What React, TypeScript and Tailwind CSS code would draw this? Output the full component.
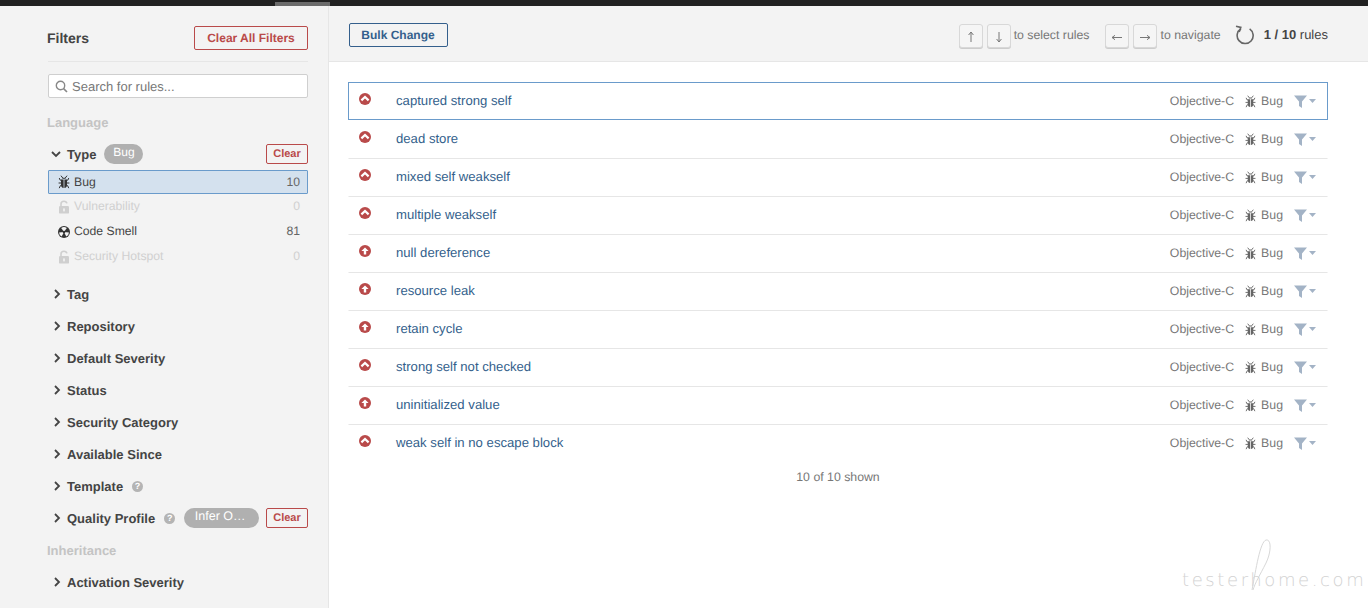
import React from "react";

const font = { fontFamily: '"Liberation Sans", Arial, sans-serif' };

function BugIcon({ className = "", color = "#333" }: { className?: string; color?: string }) {
  return (
    <svg viewBox="0 0 12 14" className={className} aria-hidden="true">
      <g stroke={color} strokeWidth="1" fill="none" strokeLinecap="round">
        <path d="M3.2 1 L4.6 2.8" />
        <path d="M8.8 1 L7.4 2.8" />
        <path d="M1.4 3.4 L2.2 5.2 L3 5.2" />
        <path d="M10.6 3.4 L9.8 5.2 L9 5.2" />
        <path d="M1 8 L3 8" />
        <path d="M11 8 L9 8" />
        <path d="M1.4 12.8 L2.4 10.6 L3 10.6" />
        <path d="M10.6 12.8 L9.6 10.6 L9 10.6" />
      </g>
      <path d="M4.2 3.8 C4.4 2.4 7.6 2.4 7.8 3.8 Z" fill={color} />
      <path d="M3 4.6 H5.6 V13 C4 12.9 3 11.6 3 10 Z" fill={color} />
      <path d="M9 4.6 H6.4 V13 C8 12.9 9 11.6 9 10 Z" fill={color} />
    </svg>
  );
}

function LockIcon({ color = "#cfcfcf" }: { color?: string }) {
  return (
    <svg viewBox="0 0 12 14" className="w-[12px] h-[14px]" aria-hidden="true">
      <path d="M3 6 V4 C3 2.2 4.3 1.2 6 1.2 C7.5 1.2 8.6 2 8.9 3.4" stroke={color} strokeWidth="1.6" fill="none" />
      <rect x="1" y="6" width="10" height="7.6" rx="1.2" fill={color} />
      <rect x="5.2" y="8.4" width="1.6" height="3" fill="#f3f3f3" />
    </svg>
  );
}

function SmellIcon() {
  return (
    <svg viewBox="0 0 12 12" className="w-[12px] h-[12px]" aria-hidden="true">
      <circle cx="6" cy="6" r="6" fill="#333" />
      <path d="M6 6 L3.2 1.9 A5 5 0 0 1 8.8 1.9 Z" fill="#f3f3f3" />
      <path d="M6 6 L1 6.4 A5 5 0 0 0 3.7 10.5 Z" fill="#f3f3f3" />
      <path d="M6 6 L11 6.4 A5 5 0 0 1 8.3 10.5 Z" fill="#f3f3f3" />
      <circle cx="6" cy="6" r="1.3" fill="#333" />
    </svg>
  );
}

function Chevron({ open = false }: { open?: boolean }) {
  return (
    <svg viewBox="0 0 10 10" className="w-[10px] h-[10px]" aria-hidden="true">
      <path d={open ? "M1 3 L5 7 L9 3" : "M3 1 L7 5 L3 9"} stroke="#444" strokeWidth="1.8" fill="none" />
    </svg>
  );
}

function Help() {
  return (
    <span className="inline-flex items-center justify-center w-[11px] h-[11px] rounded-full bg-[#b4b4b4] text-white text-[9px] font-bold leading-none">
      ?
    </span>
  );
}

function Pill({ label, wide = false }: { label: string; wide?: boolean }) {
  return (
    <span
      className={`inline-flex items-center justify-center h-[20px] rounded-full bg-[#b0b0b0] text-white font-normal pb-[4px] ${wide ? "w-[75px] text-[12.5px] pr-[3px]" : "w-[39px] text-[12px]"}`}
    >
      {label}
    </span>
  );
}

function ClearButton({ label = "Clear" }: { label?: string }) {
  return (
    <span className="inline-flex items-center justify-center w-[42px] h-[20px] pt-[1px] rounded-[2px] border border-[#b94a4a] text-[#b94a4a] text-[11px] font-bold">
      {label}
    </span>
  );
}

function FacetHeader({ label, children }: { label: string; children?: React.ReactNode }) {
  return (
    <div className="flex items-center h-[32px] text-[13px] font-bold text-[#444]">
      <span className="w-[19px] pl-[4px] flex items-center">
        <Chevron />
      </span>
      <span className="pt-[1px]">{label}</span>
      {children}
    </div>
  );
}

function TypeRow({
  icon,
  label,
  count,
  active,
  disabled,
}: {
  icon: React.ReactNode;
  label: string;
  count: number;
  active?: boolean;
  disabled?: boolean;
}) {
  return (
    <div
      className={`flex items-center pl-[9px] pr-[7px] text-[12.2px] rounded-[1px] border ${
        active ? "h-[24px] bg-[#d4e1ee] border-[#6a9bcb]" : "h-[25px] border-transparent"
      } ${disabled ? "text-[#d0d0d0]" : "text-[#444]"}`}
    >
      <span className="w-[16px] flex items-center">{icon}</span>
      <span className="flex-1">{label}</span>
      <span className={disabled ? "text-[#d0d0d0]" : "text-[#666]"}>{count}</span>
    </div>
  );
}

function SeverityIcon({ kind }: { kind: "critical" | "major" }) {
  return (
    <svg viewBox="0 0 12 12" className="w-[12px] h-[12px]" aria-hidden="true">
      <circle cx="6" cy="6" r="6" fill="#b94a4a" />
      {kind === "critical" ? (
        <path d="M2.4 7.4 L6 4 L9.6 7.4" stroke="#fff" strokeWidth="2.2" fill="none" />
      ) : (
        <path d="M6 2.4 L9.6 6 H7.2 V9.6 H4.8 V6 H2.4 Z" fill="#fff" />
      )}
    </svg>
  );
}

function FilterIcon() {
  return (
    <span className="flex items-center gap-[2px]">
      <svg viewBox="0 0 13 13" className="w-[13px] h-[13px]" aria-hidden="true">
        <path d="M0 0.5 H13 L8 6.5 V13 L5 11 V6.5 Z" fill="#a3b3c6" />
      </svg>
      <svg viewBox="0 0 7 4" className="w-[7px] h-[4px]" aria-hidden="true">
        <path d="M0 0 H7 L3.5 4 Z" fill="#a3b3c6" />
      </svg>
    </span>
  );
}

function Key({ dir }: { dir: "up" | "down" | "left" | "right" }) {
  const d = {
    up: "M11 7 V17 M8.6 10 L11 7 L13.4 10",
    down: "M11 7 V17 M8.6 14 L11 17 L13.4 14",
    left: "M6 12.5 H16 M9 10.3 L6 12.5 L9 14.7",
    right: "M6 12.5 H16 M13 10.3 L16 12.5 L13 14.7",
  }[dir];
  return (
    <span className="inline-flex w-[24px] h-[24px] rounded-[3px] border border-[#d8d8d8] bg-[#f5f5f5] shadow-[0_1px_0_#ccc]">
      <svg viewBox="0 0 22 22" className="w-[22px] h-[22px]" aria-hidden="true">
        <path d={d} stroke="#777" strokeWidth="1" fill="none" />
      </svg>
    </span>
  );
}

const rules: { name: string; sev: "critical" | "major" }[] = [
  { name: "captured strong self", sev: "critical" },
  { name: "dead store", sev: "critical" },
  { name: "mixed self weakself", sev: "critical" },
  { name: "multiple weakself", sev: "critical" },
  { name: "null dereference", sev: "major" },
  { name: "resource leak", sev: "major" },
  { name: "retain cycle", sev: "major" },
  { name: "strong self not checked", sev: "critical" },
  { name: "uninitialized value", sev: "major" },
  { name: "weak self in no escape block", sev: "critical" },
];

export default function App() {
  return (
    <div
      className="relative w-[1368px] h-[608px] overflow-hidden bg-white flex flex-col [text-rendering:geometricPrecision]"
      style={font}
    >
      <div className="h-[6px] bg-[#212121] flex shrink-0">
        <div className="w-[275px]" />
        <div className="w-[55px] mt-[2px] bg-[#6b6b6b]" />
      </div>
      <div className="flex flex-1 min-h-0">
        <aside className="w-[329px] shrink-0 bg-[#f3f3f3] border-r border-[#e6e6e6] pl-[48px] pr-[20px] overflow-hidden">
          <div className="flex items-start justify-between h-[56px] pt-[20px] border-b border-[#e6e6e6]">
            <span className="text-[14px] font-bold text-[#444] -ml-[1px] leading-[24px]">Filters</span>
            <span className="inline-flex items-center justify-center w-[114px] h-[24px] rounded-[2px] border border-[#b94a4a] text-[#b94a4a] text-[12px] font-bold">
              Clear All Filters
            </span>
          </div>
          <div className="mt-[12px] h-[24px] pt-[1px] bg-white border border-[#cfcfcf] rounded-[2px] flex items-center pl-[6px] text-[13px] text-[#777]">
            <svg viewBox="0 0 13 13" className="w-[13px] h-[13px] mr-[4px]" aria-hidden="true">
              <circle cx="5.5" cy="5.5" r="4.2" stroke="#888" strokeWidth="1.4" fill="none" />
              <path d="M8.6 8.6 L12 12" stroke="#888" strokeWidth="1.6" />
            </svg>
            Search for rules...
          </div>
          <div className="h-[32px] mt-[8px] pt-[1px] -ml-[1px] flex items-center text-[13px] font-bold text-[#c4c4c4]">Language</div>
          <div className="flex items-center h-[32px] text-[13px] font-bold text-[#444]">
            <span className="w-[19px] pl-[3px] flex items-center">
              <Chevron open />
            </span>
            <span className="pt-[1px]">Type</span>
            <span className="ml-[8px] flex">
              <Pill label="Bug" />
            </span>
            <span className="ml-auto flex">
              <ClearButton />
            </span>
          </div>
          <div className="flex flex-col">
            <TypeRow active icon={<BugIcon className="w-[12px] h-[14px]" />} label="Bug" count={10} />
            <TypeRow disabled icon={<LockIcon />} label="Vulnerability" count={0} />
            <TypeRow icon={<SmellIcon />} label="Code Smell" count={81} />
            <TypeRow disabled icon={<LockIcon />} label="Security Hotspot" count={0} />
          </div>
          <div className="mt-[9px]">
            <FacetHeader label="Tag" />
            <FacetHeader label="Repository" />
            <FacetHeader label="Default Severity" />
            <FacetHeader label="Status" />
            <FacetHeader label="Security Category" />
            <FacetHeader label="Available Since" />
            <FacetHeader label="Template">
              <span className="ml-[9px] flex">
                <Help />
              </span>
            </FacetHeader>
            <FacetHeader label="Quality Profile">
              <span className="ml-[9px] flex">
                <Help />
              </span>
              <span className="ml-[9px] flex">
                <Pill label="Infer O…" wide />
              </span>
              <span className="ml-auto flex">
                <ClearButton />
              </span>
            </FacetHeader>
            <div className="h-[32px] pt-[1px] -ml-[1px] flex items-center text-[13px] font-bold text-[#c4c4c4]">Inheritance</div>
            <FacetHeader label="Activation Severity" />
          </div>
        </aside>
        <main className="flex-1 min-w-0 flex flex-col">
          <div className="h-[56px] shrink-0 bg-[#f3f3f3] border-b border-[#e6e6e6] flex items-start pt-[17px] pl-[20px] pr-[40px]">
            <span className="inline-flex items-center justify-center w-[99px] h-[24px] pr-[1px] rounded-[2px] border border-[#345f8c] text-[#345f8c] text-[12px] font-bold">
              Bulk Change
            </span>
            <div className="ml-auto flex items-center h-[24px] mt-[1px] text-[12.3px] text-[#777]">
              <span className="flex gap-[4px]">
                <Key dir="up" />
                <Key dir="down" />
              </span>
              <span className="ml-[3px] pb-[2px]">to select rules</span>
              <span className="ml-[15px] flex gap-[4px]">
                <Key dir="left" />
                <Key dir="right" />
              </span>
              <span className="ml-[4px] pb-[2px]">to navigate</span>
              <svg viewBox="0 0 20 20" className="ml-[13px] w-[20px] h-[20px] relative -top-[1px]" aria-hidden="true">
                <path d="M6 4.2 A8 8 0 1 0 14.6 3.2" stroke="#666" strokeWidth="1.6" fill="none" transform="rotate(8 10 11)" />
                <path d="M2 1.2 L6.8 2.4 L5.2 7" stroke="#666" strokeWidth="1.6" fill="none" />
              </svg>
              <span className="ml-[10px] pb-[2px] text-[13px] text-[#444]">
                <b>1 / 10</b> rules
              </span>
            </div>
          </div>
          <div className="pt-[20px] pl-[19px] pr-[40px]">
            {rules.map((r, i) => (
              <div
                key={r.name}
                className={`flex items-center h-[38px] pl-[10px] pr-[11px] text-[13.15px] border ${
                  i === 0
                    ? "border-[#6a9bcb]"
                    : i === 1
                      ? "border-transparent"
                      : "border-transparent border-t-[#e6e6e6]"
                }`}
              >
                <span className="w-[37px] flex relative -top-[2px]">
                  <SeverityIcon kind={r.sev} />
                </span>
                <span className="text-[#345f8c]">{r.name}</span>
                <span className="ml-auto text-[12.3px] text-[#777] flex items-center">
                  <span>Objective-C</span>
                  <span className="ml-[11px] mr-[5px] flex">
                    <BugIcon className="w-[11px] h-[13px]" color="#666" />
                  </span>
                  <span>Bug</span>
                  <span className="ml-[11px]">
                    <FilterIcon />
                  </span>
                </span>
              </div>
            ))}
            <div className="mt-[6px] text-center text-[12.3px] text-[#777]">10 of 10 shown</div>
          </div>
        </main>
      </div>
      <div className="absolute left-[1182px] top-[539px] w-[186px] h-[60px] pointer-events-none">
        <svg viewBox="0 0 186 60" className="absolute inset-0 w-full h-full" aria-hidden="true">
          <path d="M70 51 C74 30 78 3 84 1 C90 0 89 14 84 24 C78 36 73 44 71 51" stroke="#d8d8d8" strokeWidth="1" fill="none" />
        </svg>
        <span
          className="absolute left-0 top-[29px] text-[18px] leading-[26px] tracking-[2.6px] text-[#d2d2d2] whitespace-nowrap"
          style={{ fontFamily: '"DejaVu Sans", sans-serif', fontWeight: 200 }}
        >
          testerhome.com
        </span>
      </div>
    </div>
  );
}
